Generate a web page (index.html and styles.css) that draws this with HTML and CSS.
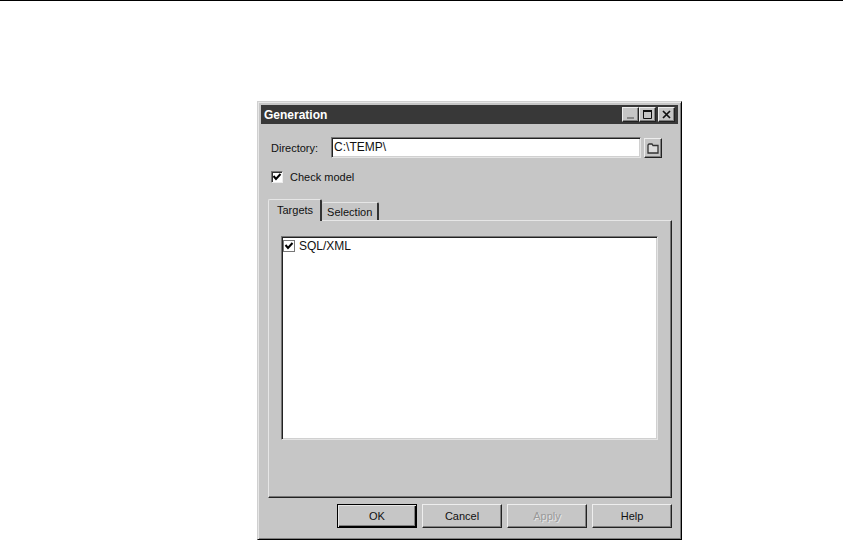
FILE: index.html
```html
<!DOCTYPE html>
<html lang="en">
<head>
    <meta charset="UTF-8">
    <meta name="viewport" content="width=device-width, initial-scale=1.0">
    <title>Generation</title>
    <link rel="stylesheet" href="styles.css">
</head>
<body>
    <form class="dialog" onsubmit="return false">
        <!-- Title bar -->
        <div class="title-bar">
            <h1 class="title">Generation</h1>
            <div class="window-buttons">
                <button type="button" class="window-button" aria-label="Minimize">
                    <svg width="13" height="11" viewBox="0 0 13 11"><path d="M3 9h7" stroke="#888" stroke-width="2"/></svg>
                </button>
                <button type="button" class="window-button" aria-label="Maximize">
                    <svg width="13" height="11" viewBox="0 0 13 11"><path d="M2.500 1v8.500h8V1" fill="none" stroke="#111"/><path d="M2 2h9" stroke="#111" stroke-width="2"/></svg>
                </button>
                <button type="button" class="window-button close" aria-label="Close">
                    <svg width="13" height="11" viewBox="0 0 13 11"><path d="M3 2l7 7M10 2l-7 7" stroke="#111" stroke-width="1.700"/></svg>
                </button>
            </div>
        </div>

        <!-- Output directory -->
        <div class="directory-row">
            <label for="directory">Directory:</label>
            <input type="text" id="directory" class="text-box" value="C:\TEMP\">
            <button type="button" class="browse-button" aria-label="Browse">
                <svg width="12" height="12" viewBox="0 0 12 12"><path d="M1 11V3l1-1h3l1 1.500h5V11z" fill="#dcdcdc" stroke="#333" stroke-width="1.300"/></svg>
            </button>
        </div>
        <div class="check-row">
            <input type="checkbox" id="checkModel" class="check-box" checked>
            <label for="checkModel">Check model</label>
        </div>

        <!-- Tabs -->
        <div class="tabs" role="tablist">
            <button type="button" class="tab active" role="tab" aria-selected="true">Targets</button>
            <button type="button" class="tab" role="tab" aria-selected="false">Selection</button>
        </div>
        <div class="tab-panel" role="tabpanel">
            <div class="target-list">
                <div class="target">
                    <input type="checkbox" id="sqlXml" class="check-box flat" checked>
                    <label for="sqlXml">SQL/XML</label>
                </div>
            </div>
        </div>

        <div class="actions">
            <button type="submit" class="button default">OK</button>
            <button type="button" class="button">Cancel</button>
            <button type="button" class="button" disabled>Apply</button>
            <button type="button" class="button">Help</button>
        </div>
    </form>
</body>
</html>
```
FILE: styles.css
```css
* {
    box-sizing: border-box;
}
body {
    margin: 0;
    padding: 100px 161px 0 257px;
    border-top: 1px solid #000;
    background: #fff;
    color: #111;
    font-family: "Liberation Sans", Arial, sans-serif;
    font-size: 11px;
    line-height: 14px;
}
button,
input {
    margin: 0;
    padding: 0;
    border-radius: 0;
    color: inherit;
    font: inherit;
}
svg {
    display: block;
}
.dialog {
    padding: 3px;
    background: #c6c6c6;
    border: 1px solid;
    border-color: #d0d0d0 #000 #000 #d0d0d0;
    box-shadow: inset 1px 1px #e6e6e6, inset -1px -1px #808080;
}

/* Title bar */
.title-bar {
    display: flex;
    align-items: center;
    justify-content: space-between;
    height: 19px;
    padding: 0 3px;
    background: #383838;
    color: #fff;
}
.title {
    margin: 0;
    font-size: 12px;
}
.window-buttons {
    display: flex;
}
.window-button,
.browse-button,
.button {
    display: flex;
    align-items: center;
    justify-content: center;
    background: #c6c6c6;
    border: 1px solid;
    border-color: #eee #222 #222 #eee;
    box-shadow: inset -1px -1px #808080;
}
.window-button {
    width: 17px;
    height: 15px;
}
.close {
    margin-left: 2px;
}

/* Fields */
.directory-row {
    display: flex;
    align-items: center;
    margin: 13px 16px 0 10px;
}
.text-box {
    flex: 1;
    min-width: 0;
    height: 21px;
    margin: 0 3px 0 13px;
    padding: 0 2px 2px;
    background: #fff;
    border: 1px solid;
    border-color: #777 #e4e4e4 #e4e4e4 #777;
    box-shadow: inset 1px 1px #222, inset -1px -1px #d0d0d0;
    font-size: 12px;
    outline: none;
}
.browse-button {
    width: 18px;
    height: 20px;
}
.check-row,
.target {
    display: flex;
    align-items: center;
}
.check-row {
    gap: 7px;
    margin: 12px 10px 0;
}
.check-box {
    appearance: none;
    width: 12px;
    height: 12px;
    background: #fff url("data:image/svg+xml,%3Csvg xmlns='http://www.w3.org/2000/svg' viewBox='0 0 10 10'%3E%3Cpath d='M1.500 4l2.500 3 4.500-5' fill='none' stroke='%23000' stroke-width='2'/%3E%3C/svg%3E") center / 10px 10px no-repeat;
    border: 1px solid;
    border-color: #777 #eee #eee #777;
    box-shadow: inset 1px 1px #333;
}
.flat {
    border-color: #777;
    box-shadow: none;
}

/* Tabs */
.tabs {
    display: flex;
    align-items: flex-end;
    margin: 15px 6px 0 7px;
}
.tab {
    height: 18px;
    padding: 0 5px;
    background: #c6c6c6;
    border: solid;
    border-width: 1px 2px 0 0;
    border-color: #e6e6e6 #333 #333 #e6e6e6;
    border-radius: 2px 2px 0 0;
}
.active {
    position: relative;
    height: 22px;
    margin-bottom: -1px;
    padding: 0 7px 2px 8px;
    border-left-width: 1px;
}
.tab-panel {
    margin: 0 6px 0 7px;
    padding: 15px 13px 57px 12px;
    border: 1px solid;
    border-color: #e6e6e6 #222 #222 #e6e6e6;
    box-shadow: inset -1px -1px #777;
}
.target-list {
    height: 204px;
    padding: 2px 1px;
    background: #fff;
    border: 1px solid;
    border-color: #777 #e4e4e4 #e4e4e4 #777;
    box-shadow: inset 1px 1px #222, inset -1px -1px #d0d0d0;
    font-size: 12px;
}
.target {
    gap: 4px;
}

/* Dialog buttons */
.actions {
    display: flex;
    justify-content: flex-end;
    gap: 5px;
    margin: 6px 6px 8px;
}
.button {
    width: 80px;
    height: 24px;
}
.default {
    border-color: #000;
    box-shadow: inset 1px 1px #e6e6e6, inset -1px -1px #000, inset -2px -2px #808080;
}
.button:disabled {
    color: #999;
    text-shadow: 1px 1px #e6e6e6;
}
```
